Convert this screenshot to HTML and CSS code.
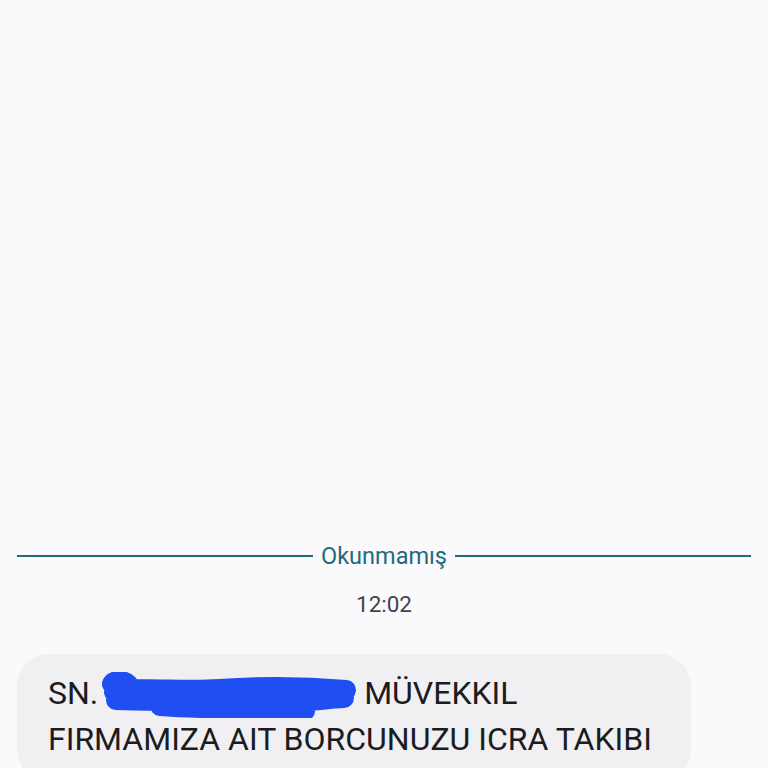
FILE: index.html
```html
<!DOCTYPE HTML>
<html lang="tr">

<head>
    <title>Mesajlar</title>
    <link rel="stylesheet" href="styles.css">
</head>

<body>
    <div class="thread">
        <div class="unread">
            <span class="rule"></span>
            <span class="unread-label">Okunmamış</span>
            <span class="rule"></span>
        </div>

        <div class="stamp">12:02</div>

        <div class="bubble">
            <p class="msg">SN. <svg class="scribble" width="258" height="46" viewBox="0 0 258 46">
                    <path d="M12 12 C 14 8, 24 8, 28 12 M14 20 C 40 14, 80 20, 120 17 S 200 14, 246 18 M16 28 C 60 30, 110 27, 150 30 S 220 27, 244 26 M60 34 C 110 38, 180 36, 205 39"
                        fill="none" stroke="#1f4ef3" stroke-width="20" stroke-linecap="round" stroke-linejoin="round" />
                </svg> MÜVEKKIL<br>FIRMAMIZA AIT BORCUNUZU ICRA TAKIBI</p>
        </div>
    </div>
</body>

</html>
```

FILE: styles.css
```css
body {
    margin: 0;
    background: #fafafd;
    font-family: Roboto, "Noto Sans", sans-serif;
    height: 768px;
    overflow: hidden;
}

.thread {
    padding-top: 539px;
}

.unread {
    display: flex;
    align-items: center;
    gap: 8px;
    padding: 0 17px;
    height: 34px;
}

.rule {
    flex: 1;
    height: 2px;
    background: #1f6b7b;
}

.unread-label {
    color: #1f6b7b;
    font-size: 23.5px;
}

.stamp {
    text-align: center;
    color: #444448;
    font-size: 22.5px;
    margin-top: 18px;
}

.bubble {
    margin: 37px 0 0 17px;
    width: 674px;
    background: #f0f0f3;
    border-radius: 32px;
    padding: 18px 0 20px 31px;
    box-sizing: border-box;
}

.msg {
    margin: 0;
    font-size: 32px;
    line-height: 43px;
    color: #1c1c1e;
}

.scribble {
    vertical-align: -14px;
    margin: 0 -2px 0 -6px;
}
```
